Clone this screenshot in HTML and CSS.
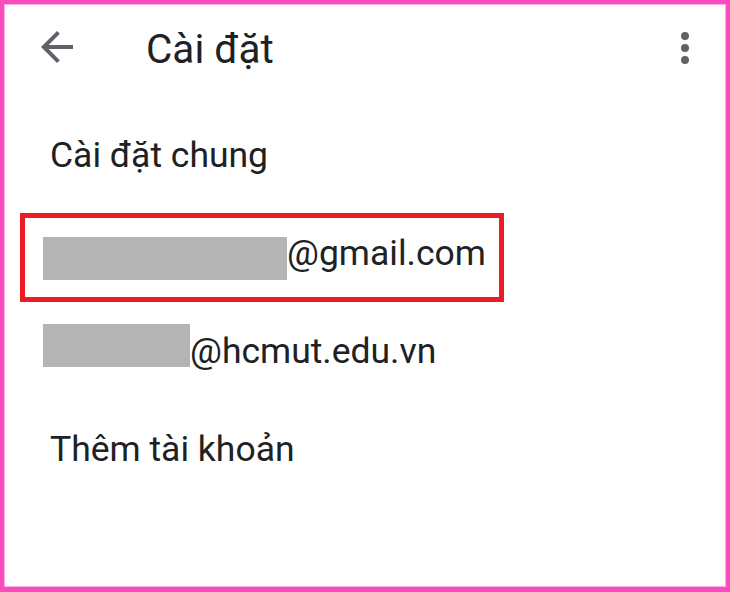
FILE: index.html
```html
<!DOCTYPE html>
<html lang="vi">
<head>
<meta charset="utf-8">
<title>Cài đặt</title>
<link rel="stylesheet" href="styles.css">
</head>
<body>
<div class="frame">
  <header class="appbar">
    <svg class="icon back" viewBox="0 0 24 24" width="48" height="48" aria-hidden="true"><path d="M20 11H7.83l5.59-5.59L12 4l-8 8 8 8 1.41-1.41L7.83 13H20v-2z"/></svg>
    <h1 class="title">Cài đặt</h1>
    <svg class="icon more" viewBox="0 0 24 24" width="48" height="48" aria-hidden="true"><circle cx="12" cy="6" r="2"/><circle cx="12" cy="12" r="2"/><circle cx="12" cy="18" r="2"/></svg>
  </header>
  <ul class="list">
    <li class="item">Cài đặt chung</li>
    <li class="item item-marked"><div class="marked"><span class="redact redact-long"></span>@gmail.com</div></li>
    <li class="item"><span class="redact redact-short"></span>@hcmut.edu.vn</li>
    <li class="item">Thêm tài khoản</li>
  </ul>
</div>
</body>
</html>
```
FILE: styles.css
```css
* { box-sizing: border-box; }
html, body { margin: 0; padding: 0; background: #fff; }
body { font-family: Roboto, "Noto Sans", "Liberation Sans", sans-serif; color: #202124; }

.frame {
  width: 730px;
  height: 592px;
  border: 4px solid #fb4cbd;
  border-bottom-width: 5px;
  background: #fff;
  box-shadow: inset 0 0 0 1px #fdb3e1;
}

.appbar {
  height: 102px;
  display: flex;
  align-items: flex-start;
  padding: 19px 17px 0 29px;
}
.icon { fill: #5f6368; flex: none; }
.more { margin-top: 1px; }
.title {
  margin: 2px 0 0 65px;
  flex: 1;
  font-size: 40.5px;
  line-height: 48px;
  font-weight: 400;
  color: #202124;
}

.list { list-style: none; margin: 0; padding: 0; }
.item {
  height: 98px;
  line-height: 98px;
  padding-left: 46px;
  font-size: 35.5px;
  color: #202124;
  white-space: nowrap;
}
.item-marked {
  padding-left: 16px;
  display: flex;
  align-items: flex-end;
  line-height: normal;
}
.marked {
  width: 484px;
  height: 89px;
  border: 5px solid #ed1c24;
  padding: 14px 0 0 18px;
}
.redact {
  display: inline-block;
  height: 43px;
  background: #b4b4b4;
}
.redact-long { width: 244px; vertical-align: -15px; }
.redact-short { width: 147px; margin-left: -7px; vertical-align: -4px; }
```
